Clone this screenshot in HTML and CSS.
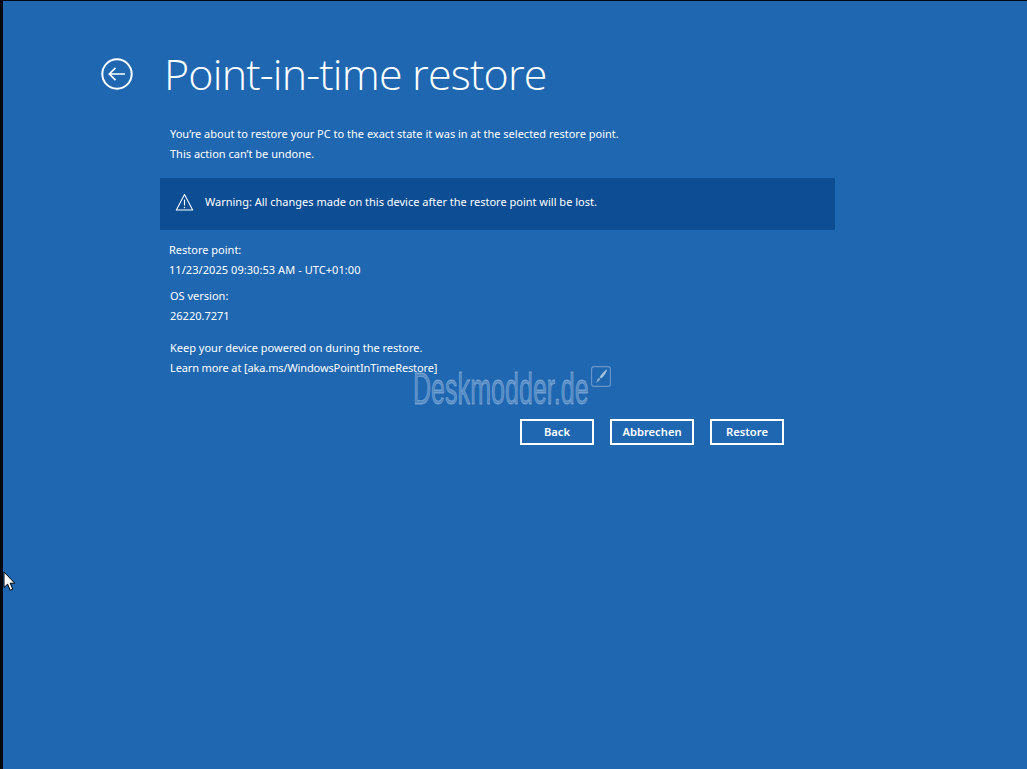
FILE: index.html
```html
<!DOCTYPE html>
<html lang="en">
<head>
<meta charset="utf-8">
<title>Point-in-time restore</title>
<link rel="stylesheet" href="styles.css">
</head>
<body>
<main class="screen">
  <header class="header">
    <svg class="back" viewBox="0 0 32 32" width="32" height="32" fill="none" stroke="#fff" aria-hidden="true">
      <circle cx="16" cy="16" r="14.7" stroke-width="2"/>
      <path d="M8.5 16H24M14.5 9.8L8.3 16l6.2 6.2" stroke-width="1.7"/>
    </svg>
    <h1 class="title">Point-in-time restore</h1>
  </header>
  <section class="intro">
    <p class="line">You’re about to restore your PC to the exact state it was in at the selected restore point.</p>
    <p class="line">This action can’t be undone.</p>
  </section>
  <section class="banner">
    <svg class="warn" viewBox="0 0 20 20" width="19" height="19" fill="none" stroke="#fff" aria-hidden="true">
      <path d="M10 1.6L18.6 18H1.4z" stroke-width="1.1" stroke-linejoin="round"/>
      <path d="M10 7v6.2" stroke-width="1.2"/>
      <circle cx="10" cy="15.3" r=".8" fill="#fff" stroke="none"/>
    </svg>
    <span class="line">Warning: All changes made on this device after the restore point will be lost.</span>
  </section>
  <section class="details">
    <div class="group">
      <p class="line">Restore point:</p>
      <p class="line line-date">11/23/2025 09:30:53 AM - UTC+01:00</p>
    </div>
    <div class="group">
      <p class="line">OS version:</p>
      <p class="line">26220.7271</p>
    </div>
    <div class="group group-last">
      <p class="line">Keep your device powered on during the restore.</p>
      <p class="line line-link">Learn more at [aka.ms/WindowsPointInTimeRestore]</p>
    </div>
  </section>
  <div class="actions">
    <button class="btn btn-back">Back</button>
    <button class="btn btn-cancel">Abbrechen</button>
    <button class="btn btn-restore">Restore</button>
  </div>
</main>
<div class="watermark">
  <span class="wm-text">Deskmodder.de</span>
  <svg class="wm-logo" viewBox="0 0 20 21" width="20" height="21" fill="none" aria-hidden="true">
    <rect x=".6" y=".6" width="18.8" height="19.8" rx="2.5" stroke="#6b97c8" stroke-width="1.1"/>
    <path d="M16.2 3.2c-2.6 1.2-5.6 4.6-7.6 7.8l1.6 1.5c2.8-2.6 5.4-6 6-9.3z" fill="#a4c0de"/>
    <path d="M8 11.6l1.5 1.5-1.2 1.6-3.4 2.2 1.6-3.6z" fill="#7ea4cd"/>
  </svg>
</div>
<svg class="cursor" viewBox="0 0 13 21" width="13" height="21" aria-hidden="true">
  <path d="M1 1v15.5l3.6-3.4 2.6 6.2 2.6-1.1-2.6-6h4.6z" fill="#fff" stroke="#000" stroke-width="1"/>
</svg>
</body>
</html>
```

FILE: styles.css
```css
* { box-sizing: border-box; }
html, body { margin: 0; height: 100%; }
body {
  position: relative;
  overflow: hidden;
  background: #05080f;
  padding: 1px 0 0 3px;
  font-family: "Noto Sans", "Open Sans", sans-serif;
  color: #fff;
}
.screen {
  height: 100%;
  background: #1f67b1;
  display: flex;
  flex-direction: column;
  padding: 41px 0 0 157px;
}
.header {
  display: flex;
  align-items: center;
  gap: 31px;
  margin-left: -59px;
  height: 64px;
}
.back { flex: none; }
.title {
  margin: 0;
  font-family: "Open Sans", sans-serif;
  font-weight: 300;
  font-size: 43px;
  line-height: 64px;
  letter-spacing: -0.82px;
  white-space: nowrap;
}
.line {
  margin: 0;
  font-size: 11px;
  line-height: 20px;
  white-space: nowrap;
}
.line-date { letter-spacing: 0.06px; }
.line-link { letter-spacing: -0.12px; }
.intro { margin: 18px 0 0 10px; }
.banner {
  display: flex;
  align-items: center;
  gap: 11px;
  width: 675px;
  height: 52px;
  margin-top: 14px;
  padding: 0 0 4px 15px;
  background: #0c4d94;
}
.details { margin: 10px 0 0 9px; }
.group { margin-bottom: 6px; }
.group + .group { margin-left: 1px; }
.group-last { margin-top: 12px; margin-bottom: 0; }
.actions {
  display: flex;
  gap: 16px;
  width: 624px;
  justify-content: flex-end;
  margin-top: 41px;
}
.btn {
  height: 26px;
  padding: 0;
  background: transparent;
  border: 2px solid #fff;
  color: #fff;
  font-family: "Noto Sans", "Open Sans", sans-serif;
  font-weight: 600;
  font-size: 11.2px;
  line-height: 20px;
}
.btn-back, .btn-restore { width: 74px; }
.btn-cancel { width: 84px; }
.watermark {
  position: absolute;
  left: 413px;
  top: 362px;
  display: flex;
  align-items: flex-start;
}
.wm-text {
  display: block;
  width: 176px;
  font-family: "Liberation Sans", sans-serif;
  font-size: 44px;
  line-height: 54px;
  color: rgba(175, 200, 230, 0.38);
  -webkit-text-stroke: 0.8px rgba(190, 212, 238, 0.5);
  white-space: nowrap;
  transform: scaleX(0.57);
  transform-origin: left center;
}
.wm-logo { margin: 4px 0 0 2px; }
.cursor { position: absolute; left: 3px; top: 571px; }
```
